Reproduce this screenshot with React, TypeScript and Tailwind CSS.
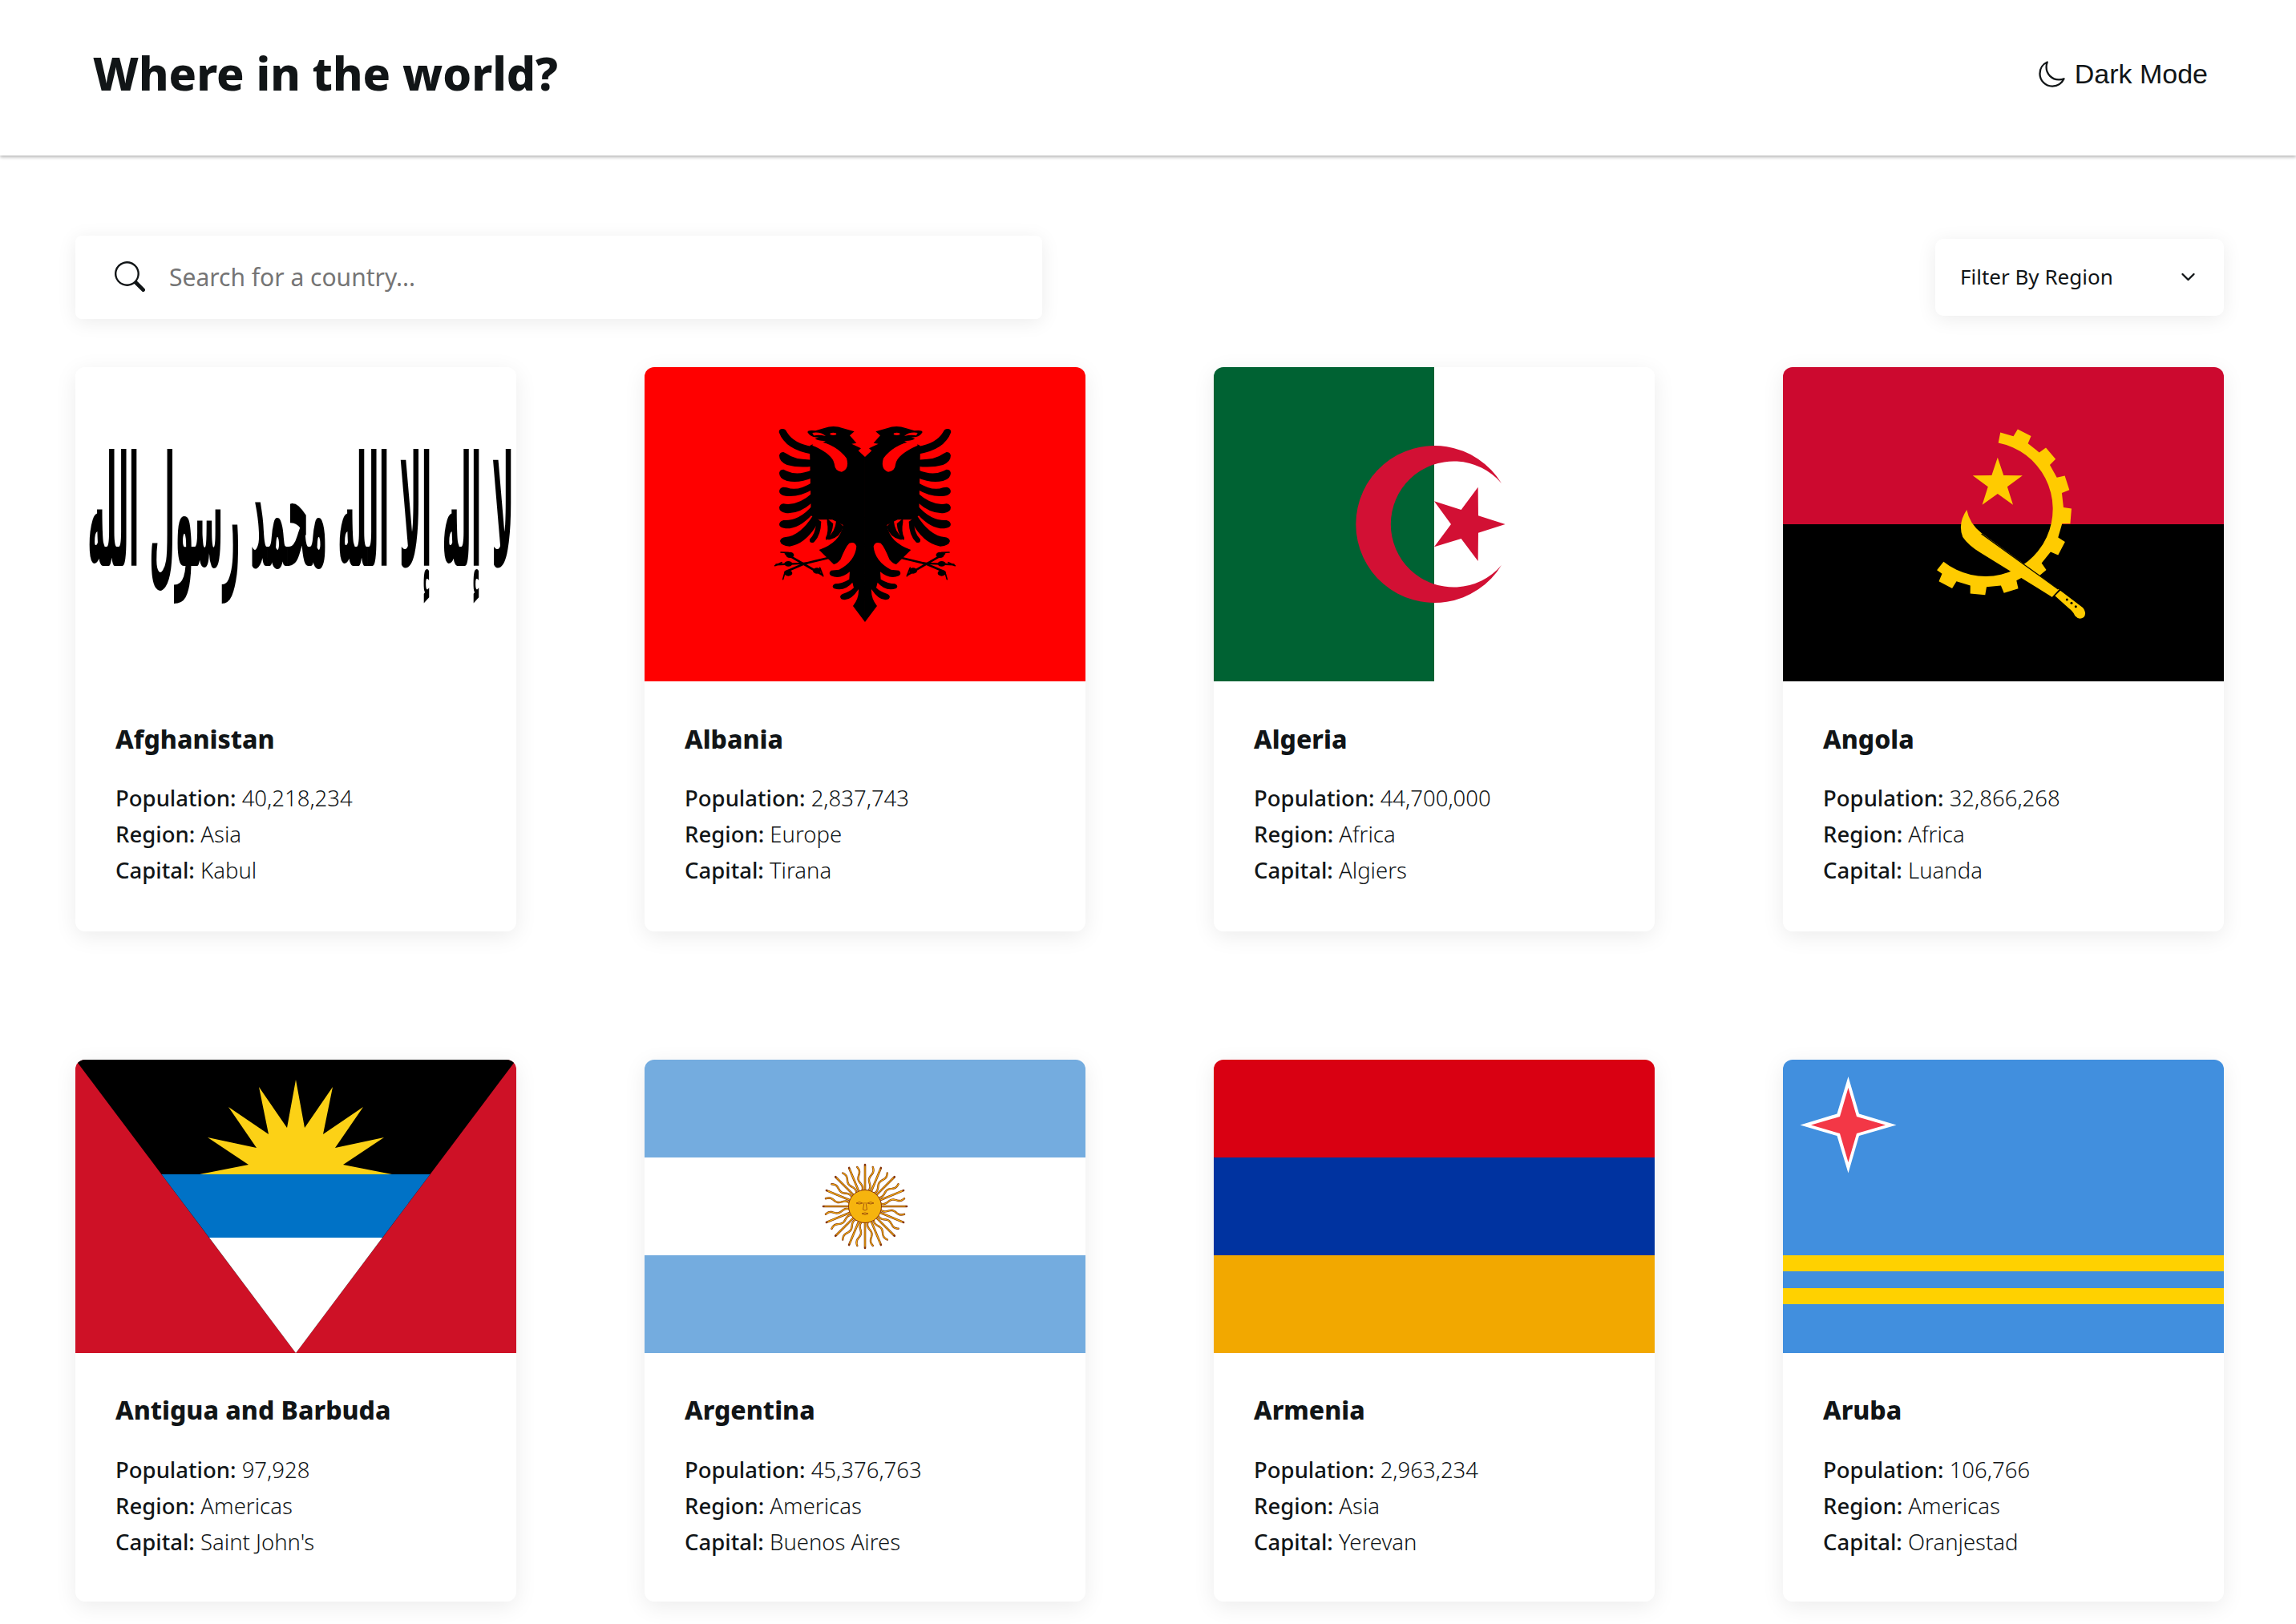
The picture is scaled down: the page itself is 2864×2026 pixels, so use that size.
import { BsSearch } from "react-icons/bs"
import { IoChevronDown, IoMoonOutline } from "react-icons/io5"

const rad = (a: number) => (a * Math.PI) / 180

const star = (cx: number, cy: number, R: number, r: number) =>
  Array.from({ length: 10 }, (_, i) => {
    const a = rad(-90 + i * 36)
    const d = i % 2 ? r : R
    return `${cx + d * Math.cos(a)},${cy + d * Math.sin(a)}`
  }).join(" ")

const gearPath = (cx: number, cy: number) => {
  const pt = (r: number, a: number) => `${cx + r * Math.cos(rad(a))} ${cy + r * Math.sin(rad(a))}`
  const from = -79
  const to = 128.5
  let d = `M${pt(252, from)} L${pt(292, from)}`
  for (let k = 0; k < 9; k++) {
    const a = -63 + 22.6 * k
    d += ` L${pt(292, a - 6)} L${pt(322, a - 5)} L${pt(322, a + 5)} L${pt(292, a + 6)}`
  }
  return `${d} L${pt(292, to)} L${pt(252, to)} A252 252 0 1 0 ${pt(252, from)}Z`
}

const wavyRay = (deg: number) => {
  const pts: string[] = []
  for (let i = 0; i <= 16; i++) {
    const t = i / 16
    const along = 19 + t * 31
    const side = 1.7 * Math.sin(t * Math.PI * 3)
    const a = rad(deg)
    pts.push(`${along * Math.sin(a) + side * Math.cos(a)},${-along * Math.cos(a) + side * Math.sin(a)}`)
  }
  return pts.join(" ")
}

const Afghanistan = () => (
  <svg viewBox="0 0 550 392" className="block h-full w-full">
    <rect width="550" height="392" fill="#fff" />
    <g transform="translate(547 248) scale(0.193 1)">
      <text
        direction="rtl"
        fontFamily="'DejaVu Sans', sans-serif"
        fontWeight="700"
        fontSize="192"
        fill="#000"
      >
        لا إله إلا الله محمد رسول الله
      </text>
    </g>
  </svg>
)

const eagleHalf = (
  <>
    <path d="M537 210L512 187L522 178L487 161L505 158L480 130L497 115L455 103Q420 90 385 102L352 112Q322 108 322 118Q335 140 365 136L350 142Q365 152 390 150L380 155L335 165L330 170L335 430L365 445L415 445L455 465Q445 530 365 558L420 612Q430 612 445 595Q465 545 478 533Q500 525 505 545Q500 600 440 632L410 635Q398 645 410 655Q445 670 480 640L478 668Q450 685 425 685Q410 692 420 702Q460 715 490 680L495 700Q480 715 455 722Q438 730 448 742Q480 755 513 705Q515 740 492 768L537 828Z" />
    <path d="M215 118Q215 105 228 105Q240 105 245 118Q270 160 340 172L340 200Q240 185 215 118Z" />
    <path d="M216 205Q218 192 232 192L245 199Q275 222 340 220L340 245Q290 252 245 240Q216 228 216 205Z" />
    <path d="M216 270Q218 257 232 257L245 263Q285 282 340 258L340 288Q290 310 245 300Q216 292 216 270Z" />
    <path d="M216 338Q218 325 232 323L245 325Q285 340 340 305L340 332Q290 362 240 356Q216 352 216 338Z" />
    <path d="M216 400Q218 387 232 385Q285 395 340 345L340 380Q290 425 240 420Q216 415 216 400Z" />
    <path d="M216 462Q218 450 232 447Q290 450 340 392L340 425Q290 480 240 478Q216 475 216 462Z" />
    <path d="M219 525Q222 512 240 510Q295 505 345 425L366 448Q320 535 255 545Q222 542 219 525Z" />
    <path d="M355 440L373 452Q372 505 345 530Q328 535 330 518Q355 495 355 440Z" />
    <path d="M395 440L418 460Q415 495 398 518Q388 525 390 512Q402 490 395 455Z" />
    <path d="M430 445L456 470Q445 510 405 520Q392 520 395 512Q425 495 430 445Z" />
    <g stroke="#000" fill="none" strokeLinecap="round">
      <path d="M400 588L310 610L240 640" strokeWidth="8" />
      <path d="M240 572L375 650" strokeWidth="8" />
      <path d="M205 613L320 608" strokeWidth="7" />
      <path d="M222 567L250 568M200 617L225 605M230 668L238 640M380 656L368 625" strokeWidth="5" />
    </g>
    <ellipse cx="256" cy="577" rx="15" ry="11" />
    <ellipse cx="250" cy="610" rx="15" ry="10" />
    <ellipse cx="250" cy="645" rx="15" ry="11" />
    <ellipse cx="357" cy="636" rx="15" ry="11" />
    <path
      d="M345 158L360 150Q430 165 468 215Q480 255 450 266Q425 265 422 235Q415 200 340 167Z"
      fill="#f00"
    />
    <ellipse cx="418" cy="124" rx="12" ry="5" fill="#f00" />
    <path d="M340 120Q370 115 390 132Q365 126 345 130Z" fill="#f00" />
  </>
)

const Albania = () => (
  <svg viewBox="0 0 550 392" className="block h-full w-full">
    <rect width="550" height="392" fill="#f00" />
    <g transform="translate(96 42) scale(0.3333)">
      {eagleHalf}
      <g transform="translate(1074 0) scale(-1 1)">{eagleHalf}</g>
    </g>
  </svg>
)

const Algeria = () => (
  <svg viewBox="0 0 550 392" className="block h-full w-full">
    <rect width="550" height="392" fill="#fff" />
    <rect width="275" height="392" fill="#006233" />
    <path d="M359 145A98 98 0 1 0 359 247A78.5 78.5 0 1 1 359 145Z" fill="#d21034" />
    <g transform="translate(126 62) scale(0.3333)">
      <polygon
        points="713,402 612,434 611,540 548,456 447,487 510,402 447,316 548,348 611,263 612,370"
        fill="#d21034"
      />
    </g>
  </svg>
)

const Angola = () => (
  <svg viewBox="0 0 550 392" className="block h-full w-full">
    <rect width="550" height="196" fill="#cc092f" />
    <rect y="196" width="550" height="196" fill="#000" />
    <g transform="translate(136 52) scale(0.3333)" fill="#ffcb00">
      <path d={gearPath(350, 375)} />
      <polygon points={star(395.5, 280, 98, 38)} />
      <path d="M280 378Q245 430 265 480Q285 510 330 538L600 705L627 678L335 465Q290 430 280 378Z" />
      <path d="M610 700L630 680L715 745Q730 765 718 780Q700 792 685 775Q680 760 660 745Z" />
      <path d="M335 468L622 675" stroke="#000" strokeWidth="4" fill="none" />
      <path d="M602 705L627 678" stroke="#000" strokeWidth="5" fill="none" />
      <circle cx="655" cy="714" r="4.5" fill="#000" />
      <circle cx="672" cy="727" r="4.5" fill="#000" />
      <circle cx="688" cy="740" r="4.5" fill="#000" />
    </g>
  </svg>
)

const Antigua = () => (
  <svg viewBox="0 0 550 366" className="block h-full w-full">
    <rect width="550" height="366" fill="#ce1126" />
    <polygon points="0,0 550,0 275,366" fill="#000" />
    <polygon
      points="155,143 216,131 165,97 226,110 191,59 241,93 229,34 264,85 275,25 286,85 321,34 309,93 359,59 324,110 385,97 334,131 395,143"
      fill="#fcd116"
    />
    <polygon points="107.5,143 442.5,143 383,222 167,222" fill="#0072c6" />
    <polygon points="167,222 383,222 275,366" fill="#fff" />
  </svg>
)

const sunRays = Array.from({ length: 32 }, (_, i) => i * 11.25)

const Argentina = () => (
  <svg viewBox="0 0 550 366" className="block h-full w-full">
    <rect width="550" height="366" fill="#74acdf" />
    <rect y="122" width="550" height="122" fill="#fff" />
    <g transform="translate(275 183)">
      {sunRays.map((deg, i) =>
        i % 2 ? (
          <g key={deg} fill="none" strokeLinecap="round">
            <polyline points={wavyRay(deg)} stroke="#85340a" strokeWidth="2.4" />
            <polyline points={wavyRay(deg)} stroke="#f6b40e" strokeWidth="1.1" />
          </g>
        ) : (
          <g key={deg} transform={`rotate(${deg})`} strokeLinecap="round">
            <line y1="-19" y2="-52" stroke="#85340a" strokeWidth="2.6" />
            <line y1="-19" y2="-50" stroke="#f6b40e" strokeWidth="1.2" />
          </g>
        ),
      )}
      <circle r="20.5" fill="#f6b40e" stroke="#85340a" strokeWidth="1" />
      <g fill="none" stroke="#85340a" strokeWidth="0.7">
        <path d="M-11 -4Q-7 -7 -3 -4Q-7 -2 -11 -4ZM3 -4Q7 -7 11 -4Q7 -2 3 -4Z" />
        <path d="M-1 -5L-2.5 4Q0 6 2.5 4L1 -5M-4 9Q0 7 4 9Q0 12 -4 9Z" />
      </g>
    </g>
  </svg>
)

const Armenia = () => (
  <svg viewBox="0 0 550 366" className="block h-full w-full">
    <rect width="550" height="122" fill="#d90012" />
    <rect y="122" width="550" height="122" fill="#0033a0" />
    <rect y="244" width="550" height="122" fill="#f2a800" />
  </svg>
)

const Aruba = () => (
  <svg viewBox="0 0 550 366" className="block h-full w-full">
    <rect width="550" height="366" fill="#418fde" />
    <rect y="244" width="550" height="20" fill="#ffd100" />
    <rect y="285" width="550" height="20" fill="#ffd100" />
    <polygon
      points="81.5,21 95,67.5 141.5,81.5 95,95 81.5,141.5 67.5,95 21.5,81.5 67.5,67.5"
      fill="#fff"
    />
    <polygon
      points="81.5,35 92,71 128,81.5 92,92 81.5,128 71,92 35,81.5 71,71"
      fill="#f33746"
    />
  </svg>
)

const countries = [
  { name: "Afghanistan", population: "40,218,234", region: "Asia", capital: "Kabul", Flag: Afghanistan },
  { name: "Albania", population: "2,837,743", region: "Europe", capital: "Tirana", Flag: Albania },
  { name: "Algeria", population: "44,700,000", region: "Africa", capital: "Algiers", Flag: Algeria },
  { name: "Angola", population: "32,866,268", region: "Africa", capital: "Luanda", Flag: Angola },
  { name: "Antigua and Barbuda", population: "97,928", region: "Americas", capital: "Saint John's", Flag: Antigua },
  { name: "Argentina", population: "45,376,763", region: "Americas", capital: "Buenos Aires", Flag: Argentina },
  { name: "Armenia", population: "2,963,234", region: "Asia", capital: "Yerevan", Flag: Armenia },
  { name: "Aruba", population: "106,766", region: "Americas", capital: "Oranjestad", Flag: Aruba },
]

const Row = ({ label, value }: { label: string; value: string }) => (
  <p className="text-[27.5px] leading-[45px] font-light text-[#111517]">
    <span className="font-medium">{label}:</span> {value}
  </p>
)

export default function App() {
  return (
    <div className="min-h-[2026px] bg-white font-['Noto_Sans',sans-serif] text-[#111517]">
      <header className="flex h-[194px] items-center justify-between bg-white pr-[110px] pb-[10px] pl-[116px] shadow-[0_2px_4px_rgba(0,0,0,0.3)]">
        <h1 className="text-[57px] font-extrabold">Where in the world?</h1>
        <button className="flex items-center gap-[10px] font-['Liberation_Sans',sans-serif] text-[34px]">
          <IoMoonOutline size={37} />
          Dark Mode
        </button>
      </header>

      <main className="pt-[100px] pr-[90px] pb-[28px] pl-[94px]">
        <div className="mb-[60px] flex items-center justify-between">
          <label className="flex h-[104px] w-[1206px] items-center gap-[30px] rounded-lg bg-white pb-[2px] pl-[49px] shadow-[0_4px_24px_rgba(0,0,0,0.08)]">
            <BsSearch size={38} className="shrink-0 text-[#111517]" />
            <input
              placeholder="Search for a country..."
              className="w-full text-[30px] outline-none placeholder:text-[#757575]"
            />
          </label>
          <div className="flex h-[96px] w-[360px] items-center justify-between rounded-[10px] bg-white pr-[32px] pb-[2px] pl-[31px] text-[26px] shadow-[0_4px_24px_rgba(0,0,0,0.08)]">
            Filter By Region
            <IoChevronDown size={25} />
          </div>
        </div>

        <div className="grid grid-cols-4 gap-[160px]">
          {countries.map(({ name, population, region, capital, Flag }, i) => (
            <article
              key={name}
              className="overflow-hidden rounded-xl bg-white shadow-[0_6px_28px_rgba(0,0,0,0.08)]"
            >
              <div className={i < 4 ? "h-[392px]" : "h-[366px]"}>
                <Flag />
              </div>
              <div className={i < 4 ? "px-[50px] pt-[48px] pb-[54px]" : "px-[50px] pt-[47px] pb-[52px]"}>
                <h2 className={i < 4 ? "mb-[27px] text-[32px] leading-[48px] font-extrabold" : "mb-[28px] text-[32px] leading-[48px] font-extrabold"}>
                  {name}
                </h2>
                <Row label="Population" value={population} />
                <Row label="Region" value={region} />
                <Row label="Capital" value={capital} />
              </div>
            </article>
          ))}
        </div>
      </main>
    </div>
  )
}
